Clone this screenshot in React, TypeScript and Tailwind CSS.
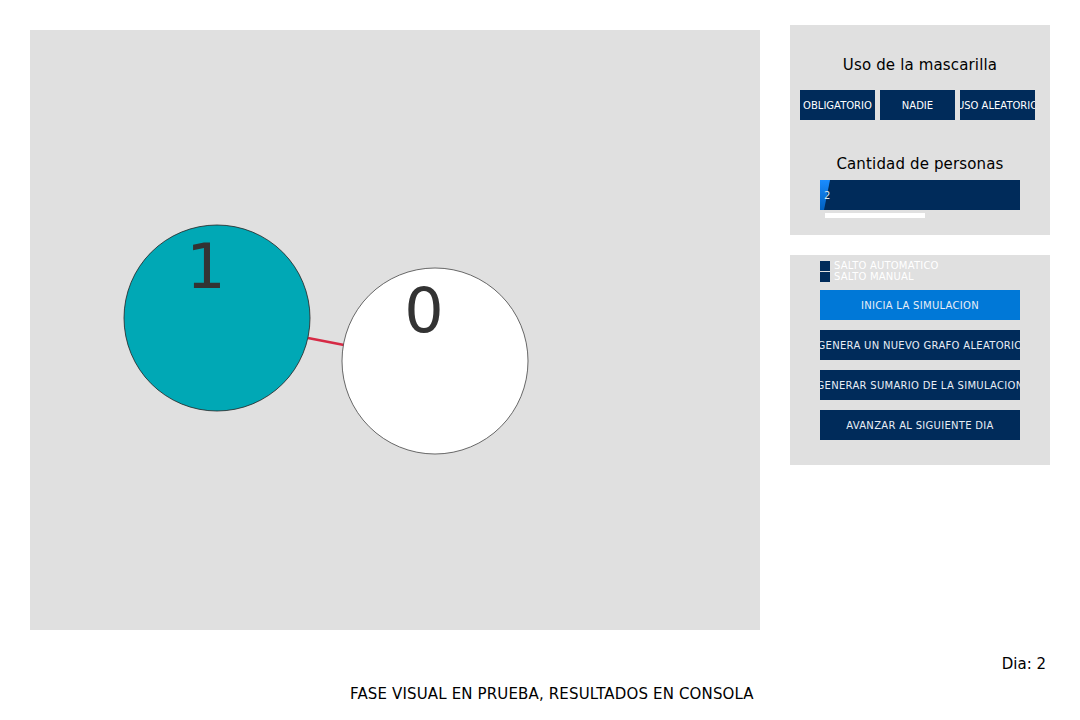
import React from "react";

const NAVY = "bg-[#002b5a]";

function TopButton({ label }: { label: string }) {
  return (
    <div className={`flex h-[30px] w-[75px] items-center justify-center overflow-hidden whitespace-nowrap ${NAVY} text-[10px] text-white`}>
      {label}
    </div>
  );
}

function WideButton({ label, active }: { label: string; active?: boolean }) {
  return (
    <div
      className={`flex h-[30px] w-[200px] items-center justify-center overflow-hidden whitespace-nowrap text-[10px] tracking-[0.3px] text-[#e8eef6] ${
        active ? "bg-[#0078d7]" : NAVY
      }`}
    >
      {label}
    </div>
  );
}

function Graph() {
  return (
    <svg width="730" height="600" viewBox="0 0 730 600" className="block">
      <line x1="278" y1="308" x2="314" y2="315" stroke="#d62a45" strokeWidth="2.5" />
      <circle cx="187" cy="288" r="93" fill="#00a8b5" stroke="#222" strokeWidth="0.8" />
      <circle cx="405" cy="331" r="93" fill="#ffffff" stroke="#444" strokeWidth="0.8" />
      <text x="176" y="258" textAnchor="middle" fontSize="62" fill="#333" fontFamily="DejaVu Sans, sans-serif">
        1
      </text>
      <text x="394" y="302" textAnchor="middle" fontSize="62" fill="#333" fontFamily="DejaVu Sans, sans-serif">
        0
      </text>
    </svg>
  );
}

export default function App() {
  return (
    <div className="relative h-[720px] w-[1080px] bg-white font-['DejaVu_Sans',sans-serif] text-black">
      <div className="flex items-start">
        <div className="ml-[30px] mt-[30px] h-[600px] w-[730px] bg-[#e0e0e0]">
          <Graph />
        </div>

        <div className="ml-[30px] mt-[25px] flex w-[260px] flex-col gap-[20px]">
          <div className="flex h-[210px] flex-col bg-[#e0e0e0]">
            <div className="mt-[31px] text-center text-[15px] leading-[18px] tracking-[0.15px]">Uso de la mascarilla</div>
            <div className="ml-[10px] mt-[16px] flex gap-[5px]">
              <TopButton label="OBLIGATORIO" />
              <TopButton label="NADIE" />
              <TopButton label="USO ALEATORIO" />
            </div>
            <div className="mt-[35px] text-center text-[15px] leading-[18px] tracking-[0.15px]">Cantidad de personas</div>
            <div className={`relative ml-[30px] mt-[7px] h-[30px] w-[200px] ${NAVY}`}>
              <div className="absolute left-0 top-0 h-[30px] w-[10px] bg-[linear-gradient(180deg,#1a8cff,#0060c0)] [clip-path:polygon(0_0,100%_0,40%_100%,0_100%)]" />
              <span className="absolute left-[4px] top-[10px] text-[10px] leading-[12px] text-[#dde6f0]">2</span>
            </div>
            <div className="ml-[35px] mt-[3px] h-[5px] w-[100px] bg-white" />
          </div>

          <div className="flex h-[210px] flex-col items-center bg-[#e0e0e0]">
            <div className="mt-[5px] flex w-[200px] flex-col text-[10px] leading-[11px] tracking-[0.2px] text-white">
              <div className="flex items-center gap-[4px]">
                <span className={`h-[10px] w-[10px] ${NAVY}`} />
                <span>SALTO AUTOMATICO</span>
              </div>
              <div className="flex items-center gap-[4px]">
                <span className={`h-[10px] w-[10px] ${NAVY}`} />
                <span>SALTO MANUAL</span>
              </div>
            </div>
            <div className="mt-[8px] flex flex-col gap-[10px]">
              <WideButton label="INICIA LA SIMULACION" active />
              <WideButton label="GENERA UN NUEVO GRAFO ALEATORIO" />
              <WideButton label="GENERAR SUMARIO DE LA SIMULACION" />
              <WideButton label="AVANZAR AL SIGUIENTE DIA" />
            </div>
          </div>
        </div>
      </div>

      <div className="mt-[25px] flex justify-end pr-[34px] text-[15px] leading-[18px]">Dia: 2</div>
      <div className="mt-[12px] pl-[350px] text-[15px] leading-[18px] tracking-[0.15px]">FASE VISUAL EN PRUEBA, RESULTADOS EN CONSOLA</div>
    </div>
  );
}
